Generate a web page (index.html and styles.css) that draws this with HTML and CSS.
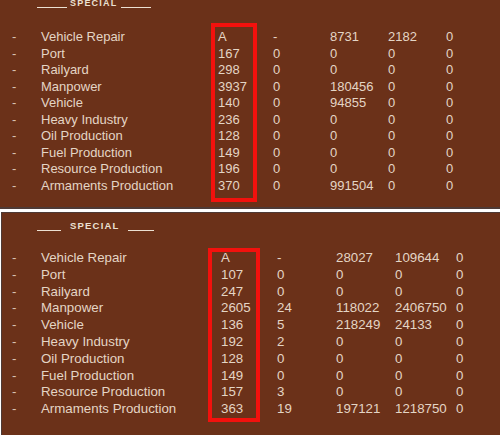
FILE: index.html
```html
<!DOCTYPE html>
<html lang="en">
<head>
    <meta charset="UTF-8">
    <title>Special</title>
    <link rel="stylesheet" href="styles.css">
</head>
<body>

<div class="panel top">
    <div class="title"><span class="rule"></span><span class="label">SPECIAL</span><span class="rule"></span></div>
    <div class="grid">
        <div class="mark"></div>
        <div class="row"><span class="dash">-</span><span>Vehicle Repair</span><span>A</span><span>-</span><span>8731</span><span>2182</span><span>0</span></div>
        <div class="row"><span class="dash">-</span><span>Port</span><span>167</span><span>0</span><span>0</span><span>0</span><span>0</span></div>
        <div class="row"><span class="dash">-</span><span>Railyard</span><span>298</span><span>0</span><span>0</span><span>0</span><span>0</span></div>
        <div class="row"><span class="dash">-</span><span>Manpower</span><span>3937</span><span>0</span><span>180456</span><span>0</span><span>0</span></div>
        <div class="row"><span class="dash">-</span><span>Vehicle</span><span>140</span><span>0</span><span>94855</span><span>0</span><span>0</span></div>
        <div class="row"><span class="dash">-</span><span>Heavy Industry</span><span>236</span><span>0</span><span>0</span><span>0</span><span>0</span></div>
        <div class="row"><span class="dash">-</span><span>Oil Production</span><span>128</span><span>0</span><span>0</span><span>0</span><span>0</span></div>
        <div class="row"><span class="dash">-</span><span>Fuel Production</span><span>149</span><span>0</span><span>0</span><span>0</span><span>0</span></div>
        <div class="row"><span class="dash">-</span><span>Resource Production</span><span>196</span><span>0</span><span>0</span><span>0</span><span>0</span></div>
        <div class="row"><span class="dash">-</span><span>Armaments Production</span><span>370</span><span>0</span><span>991504</span><span>0</span><span>0</span></div>
    </div>
</div>

<div class="panel bottom">
    <div class="title"><span class="rule"></span><span class="label">SPECIAL</span><span class="rule"></span></div>
    <div class="grid">
        <div class="mark"></div>
        <div class="row"><span class="dash">-</span><span>Vehicle Repair</span><span>A</span><span>-</span><span>28027</span><span>109644</span><span>0</span></div>
        <div class="row"><span class="dash">-</span><span>Port</span><span>107</span><span>0</span><span>0</span><span>0</span><span>0</span></div>
        <div class="row"><span class="dash">-</span><span>Railyard</span><span>247</span><span>0</span><span>0</span><span>0</span><span>0</span></div>
        <div class="row"><span class="dash">-</span><span>Manpower</span><span>2605</span><span>24</span><span>118022</span><span>2406750</span><span>0</span></div>
        <div class="row"><span class="dash">-</span><span>Vehicle</span><span>136</span><span>5</span><span>218249</span><span>24133</span><span>0</span></div>
        <div class="row"><span class="dash">-</span><span>Heavy Industry</span><span>192</span><span>2</span><span>0</span><span>0</span><span>0</span></div>
        <div class="row"><span class="dash">-</span><span>Oil Production</span><span>128</span><span>0</span><span>0</span><span>0</span><span>0</span></div>
        <div class="row"><span class="dash">-</span><span>Fuel Production</span><span>149</span><span>0</span><span>0</span><span>0</span><span>0</span></div>
        <div class="row"><span class="dash">-</span><span>Resource Production</span><span>157</span><span>3</span><span>0</span><span>0</span><span>0</span></div>
        <div class="row"><span class="dash">-</span><span>Armaments Production</span><span>363</span><span>19</span><span>197121</span><span>1218750</span><span>0</span></div>
    </div>
</div>

</body>
</html>
```

FILE: styles.css
```css
html, body {
    margin: 0;
    background-color: #fff;
}
body {
    font-family: "Liberation Sans", Arial, sans-serif;
    color: #e4d5c5;
    overflow: hidden;
}
.panel {
    background-color: #6b3119;
    overflow: hidden;
}
.top {
    height: 207px;
    border-bottom: 2px solid #4e3a36;
    padding-left: 37px;
    font-size: 13px;
}
.bottom {
    height: 240px;
    margin-top: 3px;
    margin-left: 1px;
    border-top: 1px solid #4e3a36;
    border-left: 1px solid #4e3a36;
    padding-left: 35px;
    font-size: 13.3px;
}
.title {
    display: flex;
    height: 12px;
    line-height: 12px;
    font-size: 9px;
    font-weight: bold;
    letter-spacing: 1.2px;
    color: #ece0d2;
}
.rule {
    width: 30px;
    height: 10px;
    border-bottom: 1px solid #ece0d2;
}
.label {
    margin: 0 4px 0 3px;
}
.top .title {
    margin-top: -3px;
}
.bottom .title {
    margin-top: 7px;
    font-size: 9.5px;
}
.bottom .rule:first-child {
    width: 24px;
    margin-right: 6px;
}
.bottom .rule:last-child {
    width: 26px;
    margin-left: 4px;
}
.grid {
    display: grid;
    position: relative;
    margin-left: -25px;
}
.top .grid {
    margin-top: 20px;
    grid-template-columns: 29px 177px 55px 57px 58px 58px auto;
    grid-auto-rows: 16.5px;
    line-height: 16.5px;
}
.bottom .grid {
    margin-top: 18px;
    grid-template-columns: 29px 180px 56px 59px 59px 61px auto;
    grid-auto-rows: 16.8px;
    line-height: 16.8px;
}
.row {
    display: contents;
}
.row span {
    white-space: nowrap;
}
.dash {
    color: #d9c3b2;
}
/* red highlight box drawn over the first value column */
.mark {
    position: absolute;
    grid-column: 3 / 4;
    grid-row: 1 / 11;
    border: 4px solid #f3110d;
}
.top .mark {
    top: -6px;
    bottom: -8px;
    left: -7px;
    right: 16px;
}
.bottom .mark {
    top: -2px;
    bottom: -4px;
    left: -13px;
    right: 17px;
}
```
